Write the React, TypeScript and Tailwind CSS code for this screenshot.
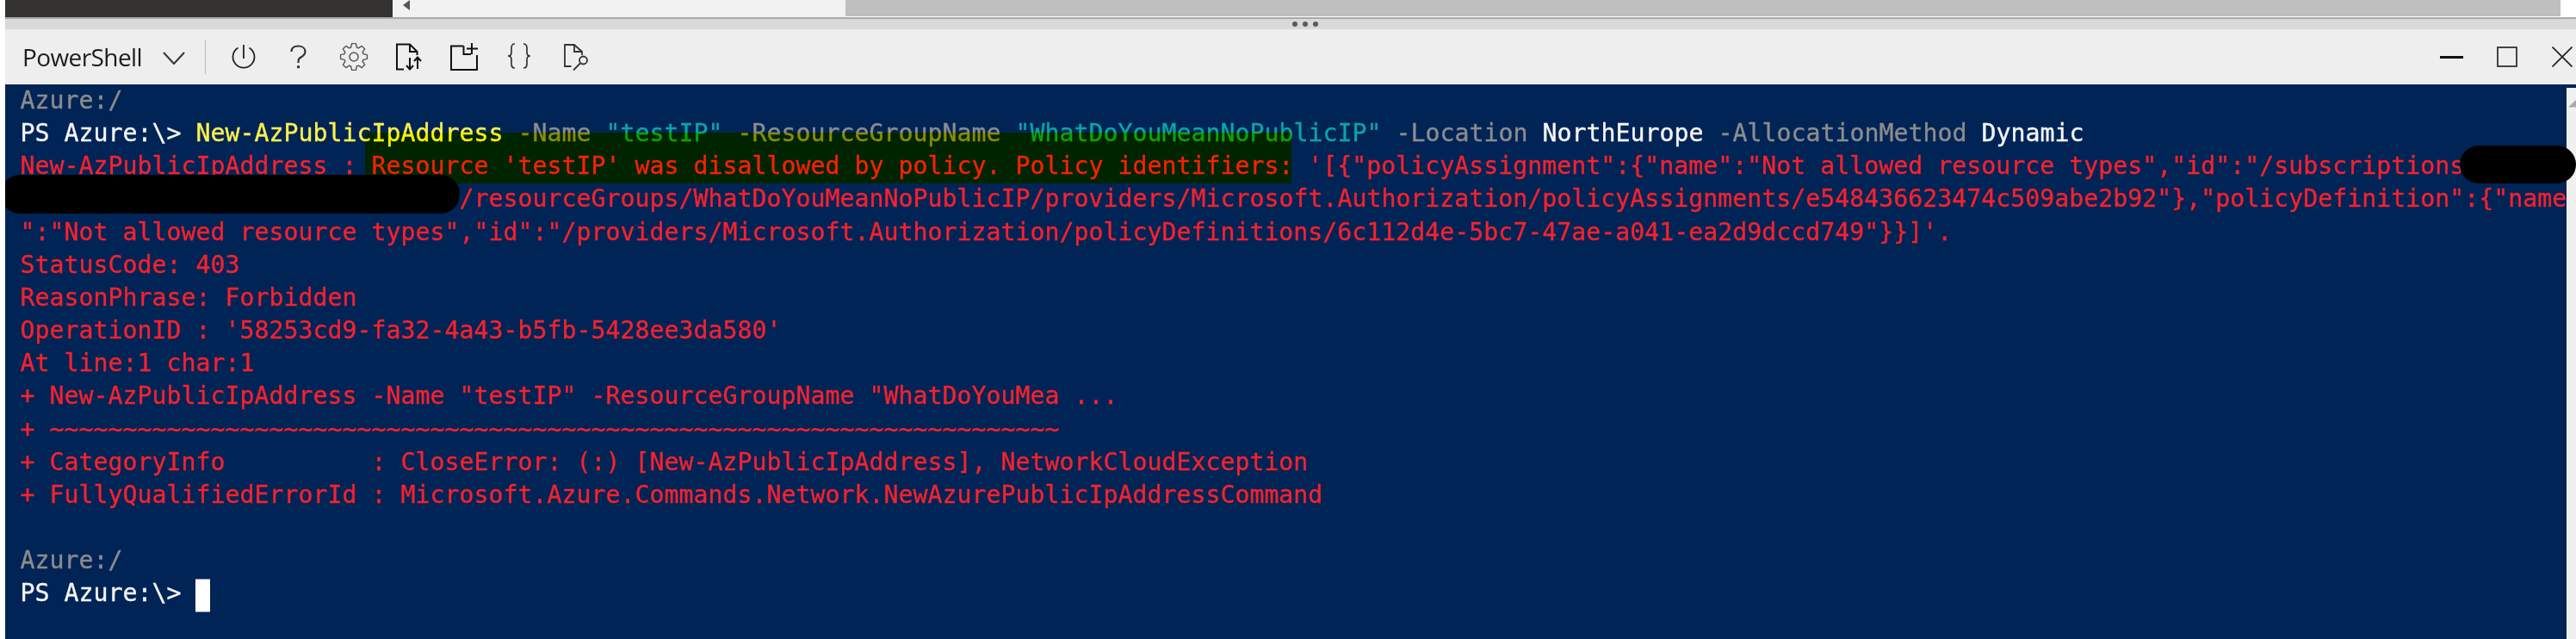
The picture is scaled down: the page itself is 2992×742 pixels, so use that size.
import React from 'react';

const gearPath = () => {
  const teeth = 8;
  const points: string[] = [];
  for (let i = 0; i < teeth; i++) {
    const a = (i / teeth) * Math.PI * 2 - Math.PI / 2;
    const step = (Math.PI * 2) / teeth;
    const at = (r: number, t: number) =>
      `${(16 + r * Math.cos(a + t * step)).toFixed(2)} ${(16 + r * Math.sin(a + t * step)).toFixed(2)}`;
    points.push(at(11.5, -0.38), at(15.6, -0.2), at(15.6, 0.2), at(11.5, 0.38));
  }
  return `M${points.join('L')}Z`;
};

function ToolIcon({ children }: { children: React.ReactNode }) {
  return (
    <div className="w-[64px] flex justify-center">
      <svg width="32" height="32" viewBox="0 0 32 32" fill="none" className="overflow-visible">
        {children}
      </svg>
    </div>
  );
}

function Toolbar() {
  return (
    <div className="h-[64px] bg-[#eeeeee] flex items-center pl-[20px] relative">
      <span className="text-[28px] text-[#1c1c1c] w-[147px] font-['Open_Sans',sans-serif] tracking-[-0.6px]">PowerShell</span>
      <svg width="26" height="15" viewBox="0 0 26 15" fill="none" className="ml-[16px] mt-[2px]">
        <path d="M1 1L13 14L25 1" stroke="#333333" strokeWidth="2" />
      </svg>
      <div className="w-px h-[40px] bg-[#bbbbbb] ml-[23px] mr-[12px]" />
      <div className="flex items-center">
        <ToolIcon>
          <path d="M9.5 5.5A12.5 12.5 0 1 0 22.5 5.5M16 2V18" stroke="#222222" strokeWidth="1.8" />
        </ToolIcon>
        <ToolIcon>
          <path d="M7.5 10C7.5 5.5 11 3.5 15.5 3.5C20 3.5 23.5 6 23.5 10C23.5 13.5 21 15 18.5 16.5C16 18 15.5 19 15.5 23" stroke="#333333" strokeWidth="2.2" />
          <rect x="14" y="26.2" width="3" height="3" fill="#333333" />
        </ToolIcon>
        <ToolIcon>
          <path d={gearPath()} stroke="#555555" strokeWidth="1.4" strokeLinejoin="round" />
          <circle cx="16" cy="16" r="5" stroke="#555555" strokeWidth="1.5" />
        </ToolIcon>
        <ToolIcon>
          <path d="M10 30.5H2V1.5H17L25.5 10V14M17 1.5V10H25.5" stroke="#111111" strokeWidth="2" />
          <path d="M17 17V30M13 26L17 30.5L21 26M26 30V17M22 21L26 16.5L30 21" stroke="#111111" strokeWidth="2" />
        </ToolIcon>
        <ToolIcon>
          <path d="M15.5 3.5H1V31H31V14M15.5 3.5V13H24M25 0V13M19 6.5H32" stroke="#111111" strokeWidth="2" />
        </ToolIcon>
        <ToolIcon>
          <path d="M11 1C7.5 1 7 3 7 6V11C7 13.5 5.5 15 3 15C5.5 15 7 16.5 7 19V24C7 27 7.5 29 11 29" stroke="#333333" strokeWidth="1.7" />
          <path d="M21 1C24.5 1 25 3 25 6V11C25 13.5 26.5 15 29 15C26.5 15 25 16.5 25 19V24C25 27 24.5 29 21 29" stroke="#333333" strokeWidth="1.7" />
        </ToolIcon>
        <ToolIcon>
          <path d="M12.5 27H5V2H16L25 10V14M16 2V10H25" stroke="#333333" strokeWidth="1.8" />
          <circle cx="26.5" cy="20" r="4.5" stroke="#333333" strokeWidth="1.8" />
          <path d="M23 23.5L15 31.5" stroke="#333333" strokeWidth="1.8" />
        </ToolIcon>
      </div>
      <div className="ml-auto flex items-center">
        <div className="w-[27px] h-[3px] bg-[#111111]" />
        <div className="w-[24px] h-[24px] border-2 border-[#444444] ml-[39px]" />
        <svg width="24" height="24" viewBox="0 0 24 24" fill="none" className="ml-[40px] mr-[4px]">
          <path d="M0.5 0.5L23.5 23.5M23.5 0.5L0.5 23.5" stroke="#222222" strokeWidth="1.7" />
        </svg>
      </div>
    </div>
  );
}

const errorLines = [
  `/resourceGroups/WhatDoYouMeanNoPublicIP/providers/Microsoft.Authorization/policyAssignments/e548436623474c509abe2b92"},"policyDefinition":{"name`,
  `":"Not allowed resource types","id":"/providers/Microsoft.Authorization/policyDefinitions/6c112d4e-5bc7-47ae-a041-ea2d9dccd749"}}]'.`,
  'StatusCode: 403',
  'ReasonPhrase: Forbidden',
  `OperationID : '58253cd9-fa32-4a43-b5fb-5428ee3da580'`,
  'At line:1 char:1',
  '+ New-AzPublicIpAddress -Name "testIP" -ResourceGroupName "WhatDoYouMea ...',
  `+ ${'~'.repeat(69)}`,
  '+ CategoryInfo          : CloseError: (:) [New-AzPublicIpAddress], NetworkCloudException',
  '+ FullyQualifiedErrorId : Microsoft.Azure.Commands.Network.NewAzurePublicIpAddressCommand',
];

function Terminal() {
  return (
    <div className="flex-1 bg-[#012456] flex relative overflow-hidden">
      <div className="flex-1 overflow-hidden pl-[17.5px] font-['DejaVu_Sans_Mono',monospace] text-[28.24px] leading-[38.15px] whitespace-pre text-[#f5222d] [-webkit-text-stroke:0.35px_currentColor]">
        <div className="text-[#8c8c8c]">Azure:/</div>
        <div className="text-[#f5f5f5]">
          PS Azure:\&gt; <span className="text-[#fdf04e]">New-AzPublicIpAddress</span>{' '}
          <span className="text-[#8c8c8c]">-Name</span> <span className="text-[#0aa5a5]">"testIP"</span>{' '}
          <span className="text-[#8c8c8c]">-ResourceGroupName</span> <span className="text-[#0aa5a5]">"WhatDoYouMeanNoPublicIP"</span>{' '}
          <span className="text-[#8c8c8c]">-Location</span> NorthEurope{' '}
          <span className="text-[#8c8c8c]">-AllocationMethod</span> Dynamic
        </div>
        <div>{`New-AzPublicIpAddress : Resource 'testIP' was disallowed by policy. Policy identifiers: '[{"policyAssignment":{"name":"Not allowed resource types","id":"/subscriptions`}</div>
        <div>{' '.repeat(30)}{errorLines[0]}</div>
        {errorLines.slice(1).map((line) => (
          <div key={line}>{line}</div>
        ))}
        <div>&nbsp;</div>
        <div className="text-[#8c8c8c]">Azure:/</div>
        <div className="text-[#f5f5f5]">
          PS Azure:\&gt; <span className="inline-block w-[17px] h-[38px] bg-white align-top translate-y-[2.5px]" />
        </div>
      </div>
      <div className="w-[11px] mt-[4px] bg-[#f0f0f0] pt-[14px]">
        <svg width="11" height="9" viewBox="0 0 11 9" className="ml-[2px]">
          <path d="M0 8.5L9 0V8.5Z" fill="#aaaaaa" />
        </svg>
      </div>
      {/* selection highlight over the output */}
      <div className="absolute left-[418px] top-[56px] w-[1076px] h-[59px] bg-[#ffff00] mix-blend-multiply" />
      {/* redactions */}
      <div className="absolute left-[2851px] top-[71px] w-[135px] h-[44px] bg-black rounded-[22px]" />
      <div className="absolute left-[-5px] top-[105px] w-[533px] h-[45px] bg-black rounded-[22px]" />
    </div>
  );
}

export default function App() {
  return (
    <div className="w-[2992px] h-[742px] bg-white pl-[6px] flex flex-col relative overflow-hidden">
      <div className="h-[20px] flex">
        <div className="w-[450px] bg-[#343331]" />
        <div className="w-[526px] bg-[#f2f2f2] relative">
          <div className="absolute left-[12px] top-0 w-0 h-0 border-y-[6px] border-y-transparent border-r-[8px] border-r-[#555555]" />
        </div>
        <div className="w-[1992px] h-[19px] bg-[#bfbfbf]" />
      </div>
      <div className="h-[2px] bg-[#a9a9a9]" />
      <div className="h-[12px] bg-[#d9d9d9] flex items-center justify-center gap-[6px] pl-[34px] shrink-0">
        <span className="w-[6px] h-[6px] rounded-full bg-[#555b60]" />
        <span className="w-[6px] h-[6px] rounded-full bg-[#555b60]" />
        <span className="w-[6px] h-[6px] rounded-full bg-[#555b60]" />
      </div>
      <Toolbar />
      <Terminal />
    </div>
  );
}
